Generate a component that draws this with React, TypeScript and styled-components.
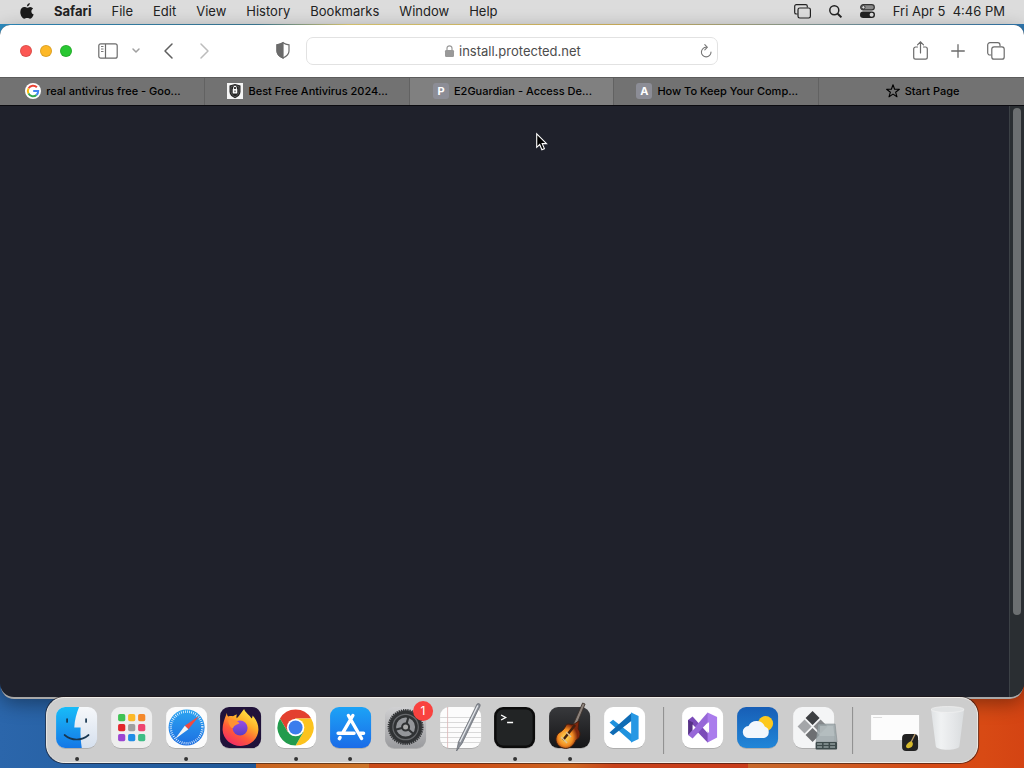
import React from 'react';
import styled, { createGlobalStyle } from 'styled-components';

const GlobalStyle = createGlobalStyle`
  * { box-sizing: border-box; }
  body { margin: 0; font-family: Inter, "Liberation Sans", sans-serif; color: #000; }
  button, input { font: inherit; color: inherit; }
  svg { display: block; flex: none; overflow: visible; }
`;

const Desktop = styled.div`
  display: flex;
  flex-direction: column;
  min-height: 100vh;
  padding-bottom: 71px;
  position: relative;
  overflow: hidden;
  background:
    linear-gradient(90deg, #2f8fc4 0, #3f7f9c 25%, #e8d47a 34%, #d8b860 62%, #88a0a0 80%, #2f78b0 100%) top / 100% 60px no-repeat,
    linear-gradient(90deg, #2b66ab 0, #1f5797 25%, #c9631f 25%, #cc7428 36%, #c94a18 36%, #cc4f18 46%, #cc641f 56%, #c7411a 60%, #c83c1a 73%, #c8682a 73%, #cb6026 80%, #d44a16 90%, #d84a14 96%, #d44413 100%);
`;

const MenuBar = styled.header`
  display: flex;
  align-items: center;
  justify-content: space-between;
  height: 24px;
  padding: 0 19px 2px 20px;
  background: #dcdcdc;
  font-size: 13px;
  line-height: 16px;
  color: #222;
`;

const MenuGroup = styled.nav<{ $gap: number }>`
  display: flex;
  align-items: center;
  gap: ${(p) => p.$gap}px;
`;

const MenuButton = styled.button<{ $bold?: boolean }>`
  border: 0;
  padding: 0;
  background: none;
  line-height: 16px;
  white-space: pre;
  font-weight: ${(p) => (p.$bold ? 700 : 400)};
`;

const BrowserWindow = styled.main`
  flex: 1;
  display: flex;
  flex-direction: column;
  margin-top: 1px;
  border-radius: 10px 10px 14px 14px;
  overflow: hidden;
  background: #1f212b;
  box-shadow: 0 3px 0 -1px #a8a8a8, 0 6px 20px rgba(0, 0, 0, 0.4);
`;

const Toolbar = styled.div`
  display: grid;
  grid-template-columns: 1fr 412px 1fr;
  align-items: center;
  height: 52px;
  background: #fff;
  color: #6b6b6b;
`;

const ToolSide = styled.div<{ $end?: boolean }>`
  display: flex;
  align-items: center;
  justify-content: ${(p) => (p.$end ? 'flex-end' : 'flex-start')};
  gap: ${(p) => (p.$end ? 20 : 8)}px;
  padding: ${(p) => (p.$end ? '0 19px 0 0' : '0 15px 0 20px')};
`;

const Lights = styled.div`
  display: flex;
  gap: 8px;
  margin-right: 18px;
`;

const Light = styled.button<{ $color: string }>`
  width: 12px;
  height: 12px;
  border: 1px solid rgba(0, 0, 0, 0.12);
  border-radius: 50%;
  padding: 0;
  background: ${(p) => p.$color};
`;

const IconButton = styled.button<{ $width: number; $push?: boolean }>`
  display: flex;
  align-items: center;
  justify-content: center;
  width: ${(p) => p.$width}px;
  height: 26px;
  border: 0;
  padding: 0 0 1px;
  background: none;
  margin-left: ${(p) => (p.$push ? 'auto' : '0')};
`;

const AddressBar = styled.form`
  display: flex;
  align-items: center;
  gap: 5px;
  height: 28px;
  padding: 0 3px 0 138px;
  border: 1px solid #e2e2e2;
  border-radius: 7px;
`;

const AddressInput = styled.input`
  flex: 1;
  min-width: 0;
  border: 0;
  padding: 0;
  outline: 0;
  background: none;
  font-size: 13px;
  line-height: 16px;
  color: #4c4c4c;
`;

const TabStrip = styled.div`
  display: grid;
  grid-template-columns: repeat(5, 1fr);
  height: 29px;
  border-top: 1px solid #5c5c5c;
  border-bottom: 1px solid #0b0b10;
`;

const Tab = styled.button<{ $active?: boolean }>`
  display: flex;
  align-items: center;
  justify-content: center;
  gap: 5px;
  min-width: 0;
  border: 0;
  border-right: 1px solid #626262;
  padding: 0 6px 1px 8px;
  background: ${(p) => (p.$active ? '#808080' : '#727272')};
  font-size: 11px;
  line-height: 16px;
  font-weight: 500;
  white-space: nowrap;
  &:last-child { border-right: 0; }
`;

const LetterIcon = styled.span`
  width: 16px;
  height: 16px;
  border-radius: 3px;
  background: #8c8d96;
  color: #fff;
  font-size: 11px;
  line-height: 16px;
  font-weight: 700;
`;

const Page = styled.section`
  flex: 1;
  display: flex;
  justify-content: flex-end;
`;

const ScrollTrack = styled.div`
  width: 15px;
  padding: 2px 3px 0;
  border-left: 1px solid #3c4146;
  background: #2a2e32;
`;

const ScrollThumb = styled.div`
  height: 86%;
  border-radius: 4px;
  background: #6c6f71;
`;

const Pointer = styled.div`
  position: absolute;
  left: 536px;
  top: 133px;
`;

const Dock = styled.nav`
  position: absolute;
  bottom: 5px;
  left: 50%;
  transform: translateX(-50%);
  display: flex;
  align-items: flex-start;
  justify-content: space-between;
  width: 91%;
  min-width: 900px;
  height: 66px;
  padding: 9px 12px 0 9px;
  border: 1px solid #f0ede8;
  border-radius: 18px;
  background: #cdcdcd;
  box-shadow: 0 0 0 1px rgba(30, 20, 20, 0.55);
`;

const DockGroup = styled.div<{ $width: number }>`
  display: flex;
  justify-content: space-between;
  width: ${(p) => p.$width}px;
`;

const DockButton = styled.button<{ $running?: boolean }>`
  position: relative;
  border: 0;
  padding: 0;
  background: none;
  height: 55px;
  display: flex;
  align-items: flex-start;
  &::after {
    content: '';
    display: ${(p) => (p.$running ? 'block' : 'none')};
    position: absolute;
    bottom: 1px;
    left: calc(50% - 2px);
    width: 4px;
    height: 4px;
    border-radius: 50%;
    background: #333;
  }
`;

const Separator = styled.div`
  width: 1px;
  height: 47px;
  background: #8d8d8d;
`;

const Badge = styled.span`
  position: absolute;
  right: -7px;
  top: -6px;
  width: 20px;
  height: 20px;
  border-radius: 50%;
  background: #f9423f;
  color: #fff;
  font-size: 12px;
  line-height: 20px;
`;

const Apple = () => (
  <svg width="14" height="17" viewBox="0 0 14 17" fill="#1c1c1c">
    <path d="M9.800 0c.1 1.500-1 3.300-2.900 3.600C6.700 2 8.100.2 9.800 0zM7.100 4.700c.8 0 1.700-.8 3.100-.8 1.200.1 2.200.6 2.900 1.500-2.600 1.600-2.100 5 .6 6.100-.6 1.700-2 4.200-3.600 4.300-1.100 0-1.500-.7-2.900-.7s-1.800.7-2.900.7C2.200 15.700.3 12.200.3 9.100c0-3.200 2-5 4-5 1.200 0 2.100.6 2.800.6z" />
  </svg>
);

const Windows = ({ size, color = '#6b6b6b' }: { size: number; color?: string }) => (
  <svg width={size} height={size} viewBox="0 0 18 18" fill="none" stroke={color} strokeWidth="1.2">
    <path d="M4.300 13H3a2.300 2.300 0 0 1-2.300-2.300V3A2.300 2.300 0 0 1 3 .7h7.700A2.300 2.300 0 0 1 13 3v1.200" />
    <rect x="4.800" y="4.800" width="12.400" height="12.400" rx="2.300" />
  </svg>
);

const MenuWindows = () => (
  <svg width="17" height="15" viewBox="0 0 17 15" fill="none" stroke="#222" strokeWidth="1.200">
    <path d="M3.500 10H2.300A1.600 1.600 0 0 1 .7 8.400V2.300A1.600 1.600 0 0 1 2.300.7h9.400a1.600 1.600 0 0 1 1.600 1.600V3.500" />
    <rect x="4" y="4" width="12.400" height="10" rx="1.700" />
  </svg>
);

const Search = () => (
  <svg width="13" height="13" viewBox="0 0 13 13" fill="none" stroke="#222" strokeWidth="1.500">
    <circle cx="5.300" cy="5.300" r="4.500" />
    <path d="m8.700 8.700 3.700 3.700" strokeWidth="2" />
  </svg>
);

const Control = () => (
  <svg width="15" height="14" viewBox="0 0 15 14">
    <rect x=".7" y=".7" width="13.600" height="5.200" rx="2.600" fill="#8a8a8a" stroke="#333" strokeWidth="1.200" />
    <circle cx="3.400" cy="3.300" r="1.700" fill="#dcdcdc" stroke="#333" />
    <rect y="7.500" width="15" height="6.500" rx="3.200" fill="#222" />
    <circle cx="11.600" cy="10.700" r="2" fill="#dcdcdc" />
  </svg>
);

const Sidebar = () => (
  <svg width="20" height="16" viewBox="0 0 20 16" fill="none" stroke="#6b6b6b" strokeWidth="1.200">
    <rect x=".8" y=".8" width="18.400" height="14.400" rx="2" />
    <path d="M7.500 1v14" />
    <path d="M3 3.500h2.500M3 6h2.500M3 8.500h2.500" strokeWidth=".9" />
  </svg>
);

const Chevron = ({ d, w, h, color, sw = 1.5 }: { d: string; w: number; h: number; color: string; sw?: number }) => (
  <svg width={w} height={h} fill="none" stroke={color} strokeWidth={sw} strokeLinecap="round" strokeLinejoin="round">
    <path d={d} />
  </svg>
);

const Shield = () => (
  <svg width="14" height="17" viewBox="0 0 14 17" fill="none" stroke="#6b6b6b" strokeWidth="1.200">
    <path d="M7 .8c1.800 1.300 3.700 1.900 6 2v6.200c0 3.300-2.300 5.300-6 7-3.700-1.700-6-3.700-6-7V2.800c2.300-.1 4.200-.7 6-2z" />
    <path d="M7 .8V16C3.300 14.300 1 12.300 1 9V2.800c2.300-.1 4.200-.7 6-2z" fill="#6b6b6b" />
  </svg>
);

const Lock = () => (
  <svg width="9" height="12" viewBox="0 0 9 12">
    <rect y="5" width="9" height="7" rx="1.200" fill="#999" />
    <path d="M2 5.500V3.300a2.500 2.500 0 0 1 5 0v2.200" fill="none" stroke="#999" strokeWidth="1.200" />
  </svg>
);

const Reload = () => (
  <svg width="12" height="14" viewBox="0 0 12 14" fill="none" stroke="#777" strokeWidth="1.100" strokeLinecap="round">
    <path d="M6.500 3.300A4.800 4.800 0 1 0 11 8" />
    <path d="m4.800.7 2.500 2.600-2.500 2.500" />
  </svg>
);

const Share = () => (
  <svg width="15" height="19" viewBox="0 0 15 19" fill="none" stroke="#6b6b6b" strokeWidth="1.200" strokeLinecap="round">
    <path d="M4.500 6H2.600A1.900 1.900 0 0 0 .7 7.900v8.400a1.900 1.900 0 0 0 1.900 1.900h9.800a1.900 1.900 0 0 0 1.900-1.900V7.900A1.900 1.900 0 0 0 12.400 6h-1.900M7.500 12V1M4.500 3.800l3-3 3 3" />
  </svg>
);

const Plus = () => (
  <svg width="14" height="14" fill="none" stroke="#6b6b6b" strokeWidth="1.300" strokeLinecap="round">
    <path d="M7 .7v12.600M.7 7h12.600" />
  </svg>
);

const Google = () => (
  <svg width="16" height="16" viewBox="0 0 16 16" fill="none" strokeWidth="2">
    <circle cx="8" cy="8" r="8" fill="#fff" />
    <path d="M11.900 4.300A5.200 5.200 0 0 0 3.500 5.400" stroke="#ea4335" />
    <path d="M3.500 5.400a5.200 5.200 0 0 0 0 5.200" stroke="#fbbc05" />
    <path d="M3.500 10.600a5.200 5.200 0 0 0 8 1.300" stroke="#34a853" />
    <path d="M11.500 11.900A5.200 5.200 0 0 0 13.200 8H8.200" stroke="#4285f4" />
  </svg>
);

const ShieldFavicon = () => (
  <svg width="16" height="16" viewBox="0 0 16 16">
    <rect width="16" height="16" fill="#f5f5f5" />
    <path d="M8 1 13.500 2.500v6c0 3.300-2.300 5.500-5.500 6.700C4.800 14 2.500 11.800 2.500 8.500v-6z" fill="#222" />
    <path d="M8 2.500 12 3.500v5c0 2.300-1.500 4-4 5.200-2.500-1.200-4-2.900-4-5.200v-5z" fill="none" stroke="#777" strokeWidth=".6" />
    <rect x="5.700" y="6" width="4.600" height="4.500" rx=".5" fill="#fff" />
    <path d="M6.600 6V4.700a1.400 1.400 0 0 1 2.800 0V6" fill="none" stroke="#fff" />
    <path d="M8 7.500v1.700" stroke="#222" />
  </svg>
);

const Star = () => (
  <svg width="14" height="14" viewBox="0 0 14 14" fill="none" stroke="#000" strokeWidth="1.100" strokeLinejoin="round">
    <path d="m7 .7 1.600 4.500 4.800.1-3.800 2.900 1.400 4.600-4-2.700-4 2.700 1.400-4.600L.6 5.300l4.800-.1z" />
  </svg>
);

const Tile = ({ fill, children }: { fill: string; children?: React.ReactNode }) => (
  <svg width="41" height="41" viewBox="0 0 41 41">
    <rect x=".3" y="1" width="40.400" height="41" rx="9" fill="#000" opacity=".15" />
    <rect width="41" height="41" rx="9" fill={fill} />
    {children}
  </svg>
);

const Finder = () => (
  <Tile fill="url(#finderRight)">
    <defs>
      <linearGradient id="finderLeft" x2="0" y2="1"><stop stopColor="#18bcf8" /><stop offset="1" stopColor="#1577e6" /></linearGradient>
      <linearGradient id="finderRight" x2="0" y2="1"><stop stopColor="#f6f8fa" /><stop offset="1" stopColor="#d6e0ee" /></linearGradient>
    </defs>
    <path d="M9 0h14c-2.500 6-4.500 13-4.800 20.500h6.300c-.3 7 .2 14 1.200 20.500H9a9 9 0 0 1-9-9V9a9 9 0 0 1 9-9z" fill="url(#finderLeft)" />
    <g fill="none" stroke="#17354f" strokeWidth="1.700" strokeLinecap="round">
      <path d="M11 12v3M30 12v3M8.500 28c7 6 17 6 24 0" />
    </g>
  </Tile>
);

const launchColors = ['#3fc253', '#fcb827', '#f4882a', '#e3262c', '#a0a0a0', '#ee456f', '#9b45d2', '#218de6', '#3dbd85'];
const Launchpad = () => (
  <Tile fill="#eeeeee">
    {launchColors.map((c, i) => (
      <rect key={c} x={7 + (i % 3) * 10} y={7 + Math.floor(i / 3) * 10} width="7.200" height="7.200" rx="1.700" fill={c} />
    ))}
  </Tile>
);

const Safari = () => (
  <Tile fill="#fbfbfb">
    <defs><linearGradient id="safari" x2="0" y2="1"><stop stopColor="#2ba4f0" /><stop offset="1" stopColor="#1d6fe2" /></linearGradient></defs>
    <circle cx="20.500" cy="20.500" r="18" fill="url(#safari)" />
    <circle cx="20.500" cy="20.500" r="15.800" fill="none" stroke="#fff" strokeWidth="2.400" strokeDasharray=".7 1.370" />
    <path d="M33 9 18.700 18.700l3.600 3.600z" fill="#f04a41" />
    <path d="M9 32l9.700-13.300 3.600 3.600z" fill="#f4f4f4" />
  </Tile>
);

const Firefox = () => (
  <Tile fill="#20123a">
    <defs>
      <linearGradient id="fox" x1=".8" y1="0" x2=".2" y2="1"><stop stopColor="#fff04a" /><stop offset=".35" stopColor="#ffb02a" /><stop offset=".65" stopColor="#ff5a38" /><stop offset="1" stopColor="#f0246c" /></linearGradient>
      <linearGradient id="globe" x2="0" y2="1"><stop stopColor="#9a4ce6" /><stop offset="1" stopColor="#5a3fc4" /></linearGradient>
    </defs>
    <path d="M24 2c1.500 4 5.500 6 7.500 9.500.8-1.200 1-2 1-3 4 4.500 6 9 5.800 14.500C37.800 32.500 30 39 20.500 39S3 32 2.500 23C2.300 17.500 4 13 6.800 6c.2 2.300.7 3 1.300 3.600 2-.6 3.200-.6 4.800-.3 1.200-1 2.300-1.400 4-1.800-.7 1.500-.8 2.600-.2 3.800C19 9 21 6 24 2z" fill="url(#fox)" />
    <circle cx="20" cy="21" r="7.500" fill="url(#globe)" />
    <path d="M8 13c4-1.500 8-.4 11.500 3.200-2.500 1.500-5 1.500-6.500 4.800-2 .5-4.500-3-5-8z" fill="#ff9131" />
  </Tile>
);

const Chrome = () => (
  <Tile fill="#fff">
    <g transform="translate(20.500 20.500)">
      <path d="M-15.600-9A18 18 0 0 1 15.600-9H0L-7.800 4.500z" fill="#e3402f" />
      <path d="M15.600-9A18 18 0 0 1 0 18L7.800 4.500 0-9z" fill="#fcc31e" />
      <path d="M0 18A18 18 0 0 1-15.600-9L-7.800 4.500H7.800z" fill="#229b4c" />
      <circle r="8.700" fill="#fff" /><circle r="7" fill="#3b7ded" />
    </g>
  </Tile>
);

const AppStore = () => (
  <Tile fill="url(#store)">
    <defs><linearGradient id="store" x2="0" y2="1"><stop stopColor="#1ca3f6" /><stop offset="1" stopColor="#1b6ce8" /></linearGradient></defs>
    <g stroke="#fff" strokeWidth="3.400" strokeLinecap="round">
      <path d="M18.300 8.500 31.500 31.500M22.800 8.500 12.500 26.200M8 26.200h16M30 26.200h3.500M10 30.500l-.8 1.200" />
    </g>
  </Tile>
);

const Settings = () => (
  <Tile fill="url(#gearBg)">
    <defs><linearGradient id="gearBg" x2="0" y2="1"><stop stopColor="#d0d0d2" /><stop offset="1" stopColor="#9a9b9e" /></linearGradient></defs>
    <g transform="translate(20.500 20)" fill="none" stroke="#303234">
      <circle r="17" fill="#66686b" strokeWidth="2" strokeDasharray="1.200 1" />
      <circle r="14.800" strokeWidth="3" />
      <circle r="10.800" strokeWidth="2.600" fill="#94969a" />
      <path d="M0 0 3-10.500M0 0 8 7M0 0-11 3" strokeWidth="2.200" />
      <circle r="3.500" strokeWidth="2" fill="#aaa" />
    </g>
  </Tile>
);

const TextEdit = () => (
  <Tile fill="#fcfcfc">
    <path d="M0 10.500h41M0 15.500h41M0 20.500h41M0 25.500h41M0 30.500h41M0 35.500h41" stroke="#cfcfcf" strokeWidth=".8" />
    <path d="M7.500 0v41" stroke="#dcb6b6" strokeWidth=".8" />
    <path d="M37-3c2-1 3.500 0 3 2L22 36.500 16.500 44l1.800-9z" fill="#8b9098" stroke="#555b63" strokeWidth=".6" />
    <path d="M37.800-1.500 19.800 35" stroke="#e5e8ec" strokeWidth="1.300" />
  </Tile>
);

const Terminal = () => (
  <Tile fill="#0c0c0c">
    <rect x="2.500" y="2.500" width="36" height="36" rx="6.500" fill="#222425" />
    <path d="m7 8 4.500 2.500L7 13M13 15.500h6" fill="none" stroke="#fff" strokeWidth="1.400" />
  </Tile>
);

const Guitar = () => (
  <g>
    <path d="M33.500-4 36-3 26.500 20l-3-1z" fill="#8c827b" stroke="#3a302a" strokeWidth=".8" />
    <path d="M17 18c3-2.500 5 1 8-1l5-3-1 8c4 5 1 10-2 11-2 5-7 10-13 8-6-1.500-9-8-6-13 2-3.500 6-2.500 9-10z" fill="url(#wood)" stroke="#401c0c" strokeWidth=".9" />
    <path d="m14 33 12-15" stroke="#42210f" strokeWidth="2.500" />
    <path d="m12 30 6 6M17 25l5 5" stroke="#dac39b" strokeWidth="1.300" />
  </g>
);

const GarageBand = () => (
  <Tile fill="url(#gb)">
    <defs>
      <linearGradient id="gb" x2="0" y2="1"><stop stopColor="#38393c" /><stop offset="1" stopColor="#151517" /></linearGradient>
      <radialGradient id="wood" cx=".4" cy=".6"><stop stopColor="#ffe05c" /><stop offset=".6" stopColor="#f28c22" /><stop offset="1" stopColor="#7e260c" /></radialGradient>
    </defs>
    <Guitar />
  </Tile>
);

const VSCode = () => (
  <Tile fill="#fff">
    <path d="M5.500 15.500 9 12.700 28 27.500V35.500z" fill="#1f92de" />
    <path d="M5.500 25.500 9 28.300 28 13.500V5.500z" fill="#0f6cb5" />
    <path d="M27 5.500 34.500 9v23L27 35.500z" fill="#2798e4" />
    <path d="M27 14.500 19.500 20.500 27 26.500z" fill="#fff" />
  </Tile>
);

const VisualStudio = () => (
  <Tile fill="#fff">
    <path d="m6 13 4.500-3.500L30 31l-4.500 4.500L6 15z" fill="#7b4bb8" />
    <path d="M6 13l5 2.500v10L6 28z" fill="#563186" />
    <path d="m6 28 4.500 3.500L28 13 25.500 5.500z" fill="#9767d8" />
    <path d="m25.500 5.500 9.500 4.500v20.500L25.500 35.500z" fill="#aa7cec" />
    <path d="m27 15-5.500 5.500L27 26z" fill="#fff" />
    <path d="m10.500 17.500 3 3-3 3z" fill="#fff" />
  </Tile>
);

const Weather = () => (
  <Tile fill="url(#sky)">
    <defs><linearGradient id="sky" x2="0" y2="1"><stop stopColor="#175eb6" /><stop offset="1" stopColor="#2186d8" /></linearGradient></defs>
    <circle cx="28.500" cy="16.500" r="7.500" fill="#fdc91e" />
    <path d="M12 31a6 6 0 0 1-.6-12 9 9 0 0 1 16.300.5A6 6 0 0 1 27 31z" fill="#f2f7fd" />
  </Tile>
);

const BootCamp = () => (
  <Tile fill="#f4f5f6">
    <path d="m19.500 4 7 7-7 7-7-7z" fill="#3d3f42" />
    <path d="m11.500 12.500 7 7-7 7-7-7z" fill="#a4a6a9" />
    <path d="m27.500 12.500 7 7-7 7-7-7z" fill="#87898c" />
    <path d="m19.500 21 7 7-7 7-7-7z" fill="#6d6f72" />
    <path d="M25 17h17l2 18H23z" fill="#9ba6a9" opacity=".85" stroke="#7c8588" strokeWidth=".6" />
    <path d="M27 19h13l1.500 10h-15z" fill="#bcc5c7" opacity=".6" />
    <rect x="22.500" y="35" width="21.500" height="7.500" rx="1" fill="#3d4a4b" />
    <path d="M24 37h18M24 40h18" stroke="#b8c4c5" strokeDasharray="5 1.500" />
  </Tile>
);

const Thumbnail = () => (
  <svg width="48" height="44" viewBox="0 0 48 44">
    <rect y="8" width="48" height="25" fill="#fcfcfc" />
    <path d="M2 10.500h9" stroke="#ddd" />
    <rect x="31" y="27" width="16" height="17" rx="4" fill="#222" />
    <path d="m38 39 6-12" stroke="#b99c6c" strokeWidth="1.300" />
    <path d="M36 37c2-2 3-3 5-2 2 2 0 6-3 6-3 1-4-2-2-4z" fill="#d5b92a" />
  </svg>
);

const Trash = () => (
  <svg width="35" height="44" viewBox="0 0 37 44" preserveAspectRatio="none">
    <defs><linearGradient id="bin"><stop stopColor="#dfe2e4" /><stop offset=".3" stopColor="#f0f2f3" /><stop offset=".7" stopColor="#e4e6e8" /><stop offset="1" stopColor="#d9dcde" /></linearGradient></defs>
    <path d="M1 2h35l-5 37c-.5 5-24.500 5-25 0z" fill="url(#bin)" />
    <ellipse cx="18.500" cy="2.500" rx="17.500" ry="3" fill="#e1e3e4" stroke="#f1f1f1" strokeWidth=".7" />
  </svg>
);

const menus = ['File', 'Edit', 'View', 'History', 'Bookmarks', 'Window', 'Help'];

const tabs = [
  { icon: <Google />, title: 'real antivirus free - Goo...' },
  { icon: <ShieldFavicon />, title: 'Best Free Antivirus 2024...' },
  { icon: <LetterIcon>P</LetterIcon>, title: 'E2Guardian - Access De...', active: true },
  { icon: <LetterIcon>A</LetterIcon>, title: 'How To Keep Your Comp...' },
  { icon: <Star />, title: 'Start Page' },
];

const apps = [
  { name: 'Finder', icon: <Finder />, running: true },
  { name: 'Launchpad', icon: <Launchpad /> },
  { name: 'Safari', icon: <Safari />, running: true },
  { name: 'Firefox', icon: <Firefox /> },
  { name: 'Chrome', icon: <Chrome />, running: true },
  { name: 'App Store', icon: <AppStore />, running: true },
  { name: 'System Preferences', icon: <Settings />, badge: '1' },
  { name: 'TextEdit', icon: <TextEdit /> },
  { name: 'Terminal', icon: <Terminal />, running: true },
  { name: 'GarageBand', icon: <GarageBand />, running: true },
  { name: 'Visual Studio Code', icon: <VSCode /> },
];

const recents = [
  { name: 'Visual Studio', icon: <VisualStudio /> },
  { name: 'Weather', icon: <Weather /> },
  { name: 'Boot Camp Assistant', icon: <BootCamp /> },
];

export default function App() {
  return (
    <Desktop>
      <GlobalStyle />
      <MenuBar>
        <MenuGroup $gap={20}>
          <MenuButton aria-label="Apple menu"><Apple /></MenuButton>
          <MenuButton $bold>Safari</MenuButton>
          {menus.map((m) => <MenuButton key={m}>{m}</MenuButton>)}
        </MenuGroup>
        <MenuGroup $gap={18}>
          <MenuButton aria-label="Windows"><MenuWindows /></MenuButton>
          <MenuButton aria-label="Search"><Search /></MenuButton>
          <MenuButton aria-label="Control Center"><Control /></MenuButton>
          <MenuButton>{'Fri Apr 5  4:46 PM'}</MenuButton>
        </MenuGroup>
      </MenuBar>
      <BrowserWindow>
        <Toolbar>
          <ToolSide>
            <Lights>
              <Light $color="#fc5753" aria-label="Close" />
              <Light $color="#fdb827" aria-label="Minimize" />
              <Light $color="#29c732" aria-label="Zoom" />
            </Lights>
            <IconButton $width={20} aria-label="Sidebar"><Sidebar /></IconButton>
            <IconButton $width={20} aria-label="Tab groups"><Chevron d="M1 1l3 3 3-3" w={8} h={5} color="#a0a0a0" /></IconButton>
            <IconButton $width={28} aria-label="Back"><Chevron d="M8 1 1 8l7 7" w={9} h={16} color="#5f5f5f" /></IconButton>
            <IconButton $width={28} aria-label="Forward"><Chevron d="M1 1l7 7-7 7" w={9} h={16} color="#bcbcbc" /></IconButton>
            <IconButton $width={16} $push aria-label="Privacy report"><Shield /></IconButton>
          </ToolSide>
          <AddressBar>
            <Lock />
            <AddressInput aria-label="Address" defaultValue="install.protected.net" />
            <IconButton $width={16} type="button" aria-label="Reload"><Reload /></IconButton>
          </AddressBar>
          <ToolSide $end>
            <IconButton $width={18} aria-label="Share"><Share /></IconButton>
            <IconButton $width={18} aria-label="New tab"><Plus /></IconButton>
            <IconButton $width={18} aria-label="Tab overview"><Windows size={18} /></IconButton>
          </ToolSide>
        </Toolbar>
        <TabStrip role="tablist">
          {tabs.map((t) => (
            <Tab key={t.title} role="tab" aria-selected={!!t.active} $active={t.active}>
              {t.icon}
              <span>{t.title}</span>
            </Tab>
          ))}
        </TabStrip>
        <Page>
          <ScrollTrack><ScrollThumb /></ScrollTrack>
        </Page>
      </BrowserWindow>
      <Pointer>
        <svg width="12" height="18" viewBox="0 0 12 18">
          <path d="M.7.8v13.500l3-2.800 2.200 5.200 2.500-1.100-2.200-5h4.300z" fill="#000" stroke="#fff" strokeWidth="1.100" />
        </svg>
      </Pointer>
      <Dock aria-label="Dock">
        <DockGroup $width={589}>
          {apps.map((a) => (
            <DockButton key={a.name} aria-label={a.name} $running={a.running}>
              {a.icon}
              {a.badge && <Badge>{a.badge}</Badge>}
            </DockButton>
          ))}
        </DockGroup>
        <Separator />
        <DockGroup $width={152}>
          {recents.map((a) => (
            <DockButton key={a.name} aria-label={a.name}>{a.icon}</DockButton>
          ))}
        </DockGroup>
        <Separator />
        <DockGroup $width={94}>
          <DockButton aria-label="Minimized window"><Thumbnail /></DockButton>
          <DockButton aria-label="Trash"><Trash /></DockButton>
        </DockGroup>
      </Dock>
    </Desktop>
  );
}
